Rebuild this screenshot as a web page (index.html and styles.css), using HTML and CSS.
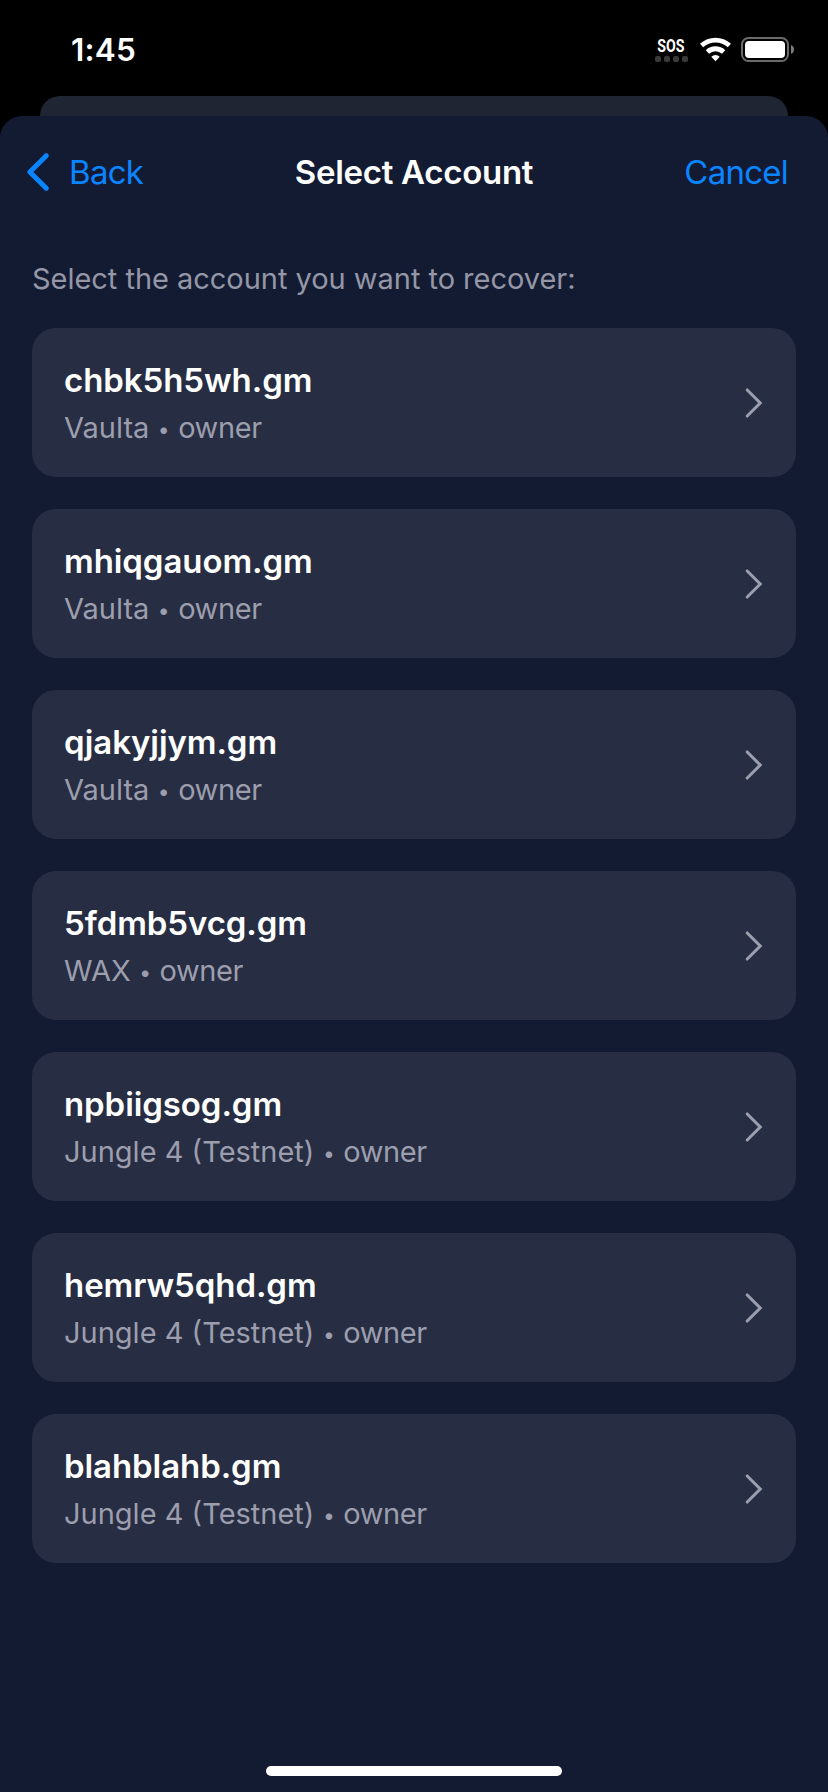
FILE: index.html
```html
<!DOCTYPE html>
<html lang="en">
<head>
<meta charset="utf-8">
<title>Select Account</title>
<link rel="stylesheet" href="styles.css">
</head>
<body>
<svg class="defs" width="0" height="0" aria-hidden="true">
  <symbol id="chevron" viewBox="0 0 18 32">
    <path d="M2.2 3 15.2 16 2.2 29" fill="none" stroke="currentColor" stroke-width="3.1" stroke-linecap="round" stroke-linejoin="miter"/>
  </symbol>
</svg>
<div class="screen">
  <header class="status">
    <span class="time">1:45</span>
    <svg class="indicators" width="144" height="30" viewBox="0 0 144 30" role="img" aria-label="SOS, Wi-Fi, battery">
      <text class="sos" x="7.2" y="17.3" textLength="27.2" lengthAdjust="spacingAndGlyphs">SOS</text>
      <g fill="#3a3a3a">
        <rect x="5" y="21" width="6" height="6" rx="2"/>
        <rect x="14" y="21" width="6" height="6" rx="2"/>
        <rect x="23" y="21" width="6" height="6" rx="2"/>
        <rect x="32" y="21" width="6" height="6" rx="2"/>
      </g>
      <g fill="none" stroke="#fff" stroke-width="4.8">
        <path d="M51.600 10.600a20.600 20.600 0 0 1 27.800 0"/>
        <path d="M57.400 16.900a12 12 0 0 1 16.200 0"/>
      </g>
      <path d="M61.300 21.700a6.200 6.200 0 0 1 8.400 0L65.500 26.300z" fill="#fff"/>
      <rect x="92" y="3" width="46" height="23" rx="6.500" fill="none" stroke="#6a6a6a" stroke-width="2"/>
      <rect x="95" y="6" width="40" height="17" rx="4" fill="#fff"/>
      <path d="M141 10q3 1.200 3 4.500t-3 4.500z" fill="#7a7a7a"/>
    </svg>
  </header>
  <div class="sheet-behind"></div>
  <main class="sheet">
    <nav class="nav">
      <a class="back">
        <svg width="24" height="40" viewBox="0 0 24 40"><path d="M20.300 3.700 3.800 20 20.300 36.300" fill="none" stroke="currentColor" stroke-width="5" stroke-linecap="round" stroke-linejoin="round"/></svg>
        <span>Back</span>
      </a>
      <h1 class="title">Select Account</h1>
      <a class="cancel">Cancel</a>
    </nav>
    <p class="prompt">Select the account you want to recover:</p>
    <div class="accounts">
      <div class="card"><div><div class="name">chbk5h5wh.gm</div><div class="meta">Vaulta <span class="dot">•</span> <span class="role">owner</span></div></div><svg class="go"><use href="#chevron"/></svg></div>
      <div class="card"><div><div class="name">mhiqgauom.gm</div><div class="meta">Vaulta <span class="dot">•</span> <span class="role">owner</span></div></div><svg class="go"><use href="#chevron"/></svg></div>
      <div class="card"><div><div class="name">qjakyjjym.gm</div><div class="meta">Vaulta <span class="dot">•</span> <span class="role">owner</span></div></div><svg class="go"><use href="#chevron"/></svg></div>
      <div class="card"><div><div class="name">5fdmb5vcg.gm</div><div class="meta">WAX <span class="dot">•</span> <span class="role">owner</span></div></div><svg class="go"><use href="#chevron"/></svg></div>
      <div class="card"><div><div class="name">npbiigsog.gm</div><div class="meta">Jungle 4 (Testnet) <span class="dot">•</span> <span class="role">owner</span></div></div><svg class="go"><use href="#chevron"/></svg></div>
      <div class="card"><div><div class="name">hemrw5qhd.gm</div><div class="meta">Jungle 4 (Testnet) <span class="dot">•</span> <span class="role">owner</span></div></div><svg class="go"><use href="#chevron"/></svg></div>
      <div class="card"><div><div class="name">blahblahb.gm</div><div class="meta">Jungle 4 (Testnet) <span class="dot">•</span> <span class="role">owner</span></div></div><svg class="go"><use href="#chevron"/></svg></div>
    </div>
    <div class="home"></div>
  </main>
</div>
</body>
</html>
```
FILE: styles.css
```css
* { box-sizing: border-box; }
body { margin: 0; background: #000; font-family: Inter, "Liberation Sans", sans-serif; }
.defs { display: block; }
.screen { display: flex; flex-direction: column; height: 1792px; overflow: hidden; }

.status {
  display: flex;
  justify-content: space-between;
  align-items: flex-start;
  height: 96px;
  padding: 30px 34px 0 71px;
}
.time { color: #fff; font-size: 31.5px; font-weight: 600; line-height: 40px; letter-spacing: .2px; }
.indicators { margin-top: 5px; }
.sos { font: 700 18.5px Roboto, sans-serif; fill: #fff; }

.sheet-behind {
  flex: none;
  height: 20px;
  margin: 0 40px;
  border-radius: 20px 20px 0 0;
  background: #202534;
}
.sheet {
  flex: 1;
  display: flex;
  flex-direction: column;
  border-radius: 22px 22px 0 0;
  background: #131b33;
}

.nav {
  display: grid;
  grid-template-columns: 1fr auto 1fr;
  align-items: center;
  height: 112px;
  padding: 0 40px 0 26px;
  font-size: 33px;
  line-height: 40px;
  color: #0a84ff;
}
.back { display: flex; align-items: center; gap: 19px; letter-spacing: -.7px; }
.title { margin: 0 0 0 14px; font-size: 33px; font-weight: 600; letter-spacing: -.28px; color: #fff; }
.cancel { justify-self: end; letter-spacing: -.75px; }

.prompt {
  margin: 33px 32px 0;
  font-size: 29px;
  line-height: 36px;
  letter-spacing: -.03px;
  white-space: nowrap;
  color: #9597a6;
}

.accounts { display: flex; flex-direction: column; gap: 32px; margin: 31px 32px 0; }
.card {
  display: flex;
  justify-content: space-between;
  height: 149px;
  padding: 32px 33px 0 32px;
  border-radius: 24px;
  background: #272d42;
}
.name { font-size: 33px; font-weight: 600; line-height: 40px; letter-spacing: -.08px; color: #fff; }
.meta { margin-top: 10px; font-size: 29px; line-height: 36px; color: #9c9eae; }
.dot { display: inline-block; width: 12.5px; font-size: 21px; line-height: 1; text-align: center; vertical-align: 1px; }
.role { letter-spacing: -.4px; }
.go { width: 18px; height: 32px; margin-top: 26.5px; color: #9c9eae; }

.home { width: 296px; height: 10px; margin: auto auto 16px; border-radius: 5px; background: #fff; }
```
